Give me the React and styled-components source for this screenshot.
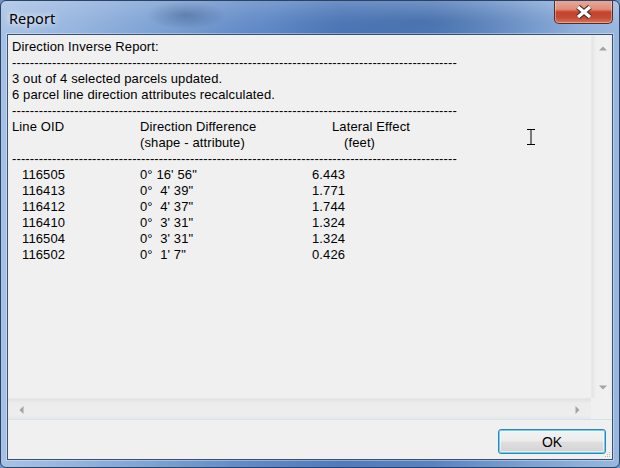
import React from "react";
import styled, { createGlobalStyle } from "styled-components";

const GlobalStyle = createGlobalStyle`
  html, body { margin: 0; padding: 0; width: 620px; height: 468px; overflow: hidden; background: #6f93c6; }
  #root { width: 620px; height: 468px; }
`;

const Window = styled.div`
  position: relative;
  box-sizing: border-box;
  width: 620px;
  height: 468px;
  border: 1px solid #2b4466;
  border-radius: 6px;
  display: flex;
  flex-direction: column;
  overflow: hidden;
  background:
    linear-gradient(180deg, rgba(255,255,255,0.18) 0px, rgba(255,255,255,0.05) 20px, rgba(255,255,255,0) 34px),
    radial-gradient(ellipse 40px 14px at 185px 14px, rgba(40,70,120,0.45), rgba(40,70,120,0)),
    radial-gradient(ellipse 160px 30px at 420px 20px, rgba(40,80,140,0.45), rgba(40,80,140,0)),
    linear-gradient(90deg, #a7c2e5 0%, #94b3de 12%, #7da2d4 24%, #6089c6 40%, #4f7bbd 55%, #5883c2 70%, #7ba0d3 85%, #98b8df 100%);
`;

const TitleBar = styled.div`
  height: 33px;
  display: flex;
  justify-content: space-between;
  align-items: flex-start;
  padding-left: 8px;
`;

const Title = styled.span`
  margin-top: 7px;
  font-family: "Noto Sans", "Liberation Sans", sans-serif;
  font-size: 14.5px;
  line-height: 20px;
  color: #000;
  text-shadow: 0 0 6px rgba(255,255,255,0.9), 0 0 10px rgba(255,255,255,0.6);
`;

const CloseButton = styled.div`
  box-sizing: border-box;
  width: 59px;
  height: 24px;
  margin-right: 6px;
  margin-top: -1px;
  border: 1px solid #5b2a22;
  border-top: none;
  border-radius: 0 0 5px 5px;
  display: flex;
  align-items: center;
  justify-content: center;
  background: linear-gradient(180deg, #e9a899 0%, #de8f7c 40%, #c8432b 52%, #c24a33 75%, #d9735c 100%);
  box-shadow: inset 0 0 0 1px rgba(255,255,255,0.35);
`;

const Client = styled.div`
  flex: 1;
  margin: 0 6px 7px 6px;
  border: 1px solid #37516f;
  box-shadow: 0 0 0 1px rgba(255,255,255,0.35);
  background: #f0f0f0;
  display: flex;
  flex-direction: column;
  min-height: 0;
`;

const ReportBox = styled.div`
  flex: 1;
  min-height: 0;
  display: grid;
  grid-template-columns: 1fr 21px;
  grid-template-rows: 1fr 21px;
  border-bottom: 1px solid #d3e1f1;
`;

const TextArea = styled.div`
  overflow: hidden;
  padding: 4px 0 0 4px;
  font-family: "Liberation Sans", Arial, sans-serif;
  font-size: 13px;
  letter-spacing: 0.12px;
  line-height: 16px;
  color: #000;
  white-space: pre;
`;

const Line = styled.div`
  height: 16px;
`;

const Dashes = styled.div`
  height: 16px;
`;

const HeaderRow = styled.div`
  display: grid;
  grid-template-columns: 128px 192px auto;
  height: 16px;
`;

const Cell = styled.span`
  padding-left: ${(p) => p.$indent || 0}px;
`;

const DataRow = styled.div`
  display: grid;
  grid-template-columns: 118px 172px auto;
  padding-left: 10px;
  height: 16px;
`;

const VScroll = styled.div`
  display: flex;
  flex-direction: column;
  justify-content: space-between;
  padding-top: 3px;
  background: linear-gradient(90deg, #e4e4e4 0%, #efefef 20%, #f1f1f1 80%, #ebebeb 100%);
  border-left: 1px solid #e8e8e8;
`;

const HScroll = styled.div`
  display: flex;
  justify-content: space-between;
  padding: 0 3px;
  background: linear-gradient(180deg, #e2e2e2 0%, #ececec 20%, #eeeeee 80%, #e8e8e8 100%);
  border-top: 1px solid #e6e6e6;
`;

const Corner = styled.div`
  background: #f0f0f0;
`;

const ArrowBtn = styled.div`
  width: 21px;
  height: 21px;
  display: flex;
  align-items: center;
  justify-content: center;
`;

const Footer = styled.div`
  position: relative;
  height: 39px;
  display: flex;
  justify-content: flex-end;
  align-items: flex-start;
  padding: 9px 6px 0 0;
  box-sizing: border-box;
`;

const OkButton = styled.button`
  box-sizing: border-box;
  width: 108px;
  height: 25px;
  padding: 0;
  border: 1px solid #3c7fb1;
  border-radius: 3px;
  background: linear-gradient(180deg, #f3f3f3 0%, #ececec 48%, #dfdfdf 52%, #d2d2d2 100%);
  box-shadow: inset 0 0 0 1px #5fd6f7, inset 0 0 0 2px rgba(255,255,255,0.5);
  font-family: "Liberation Sans", Arial, sans-serif;
  font-size: 14px;
  color: #000;
`;

const Grip = styled.svg`
  position: absolute;
  right: 1px;
  bottom: 1px;
`;

const Cursor = styled.svg`
  position: absolute;
  left: 526px;
  top: 128px;
`;

const Arrow = ({ dir }) => {
  const pts = {
    up: "0,4.5 4,0.5 8,4.5",
    down: "0,0.5 4,4.5 8,0.5",
    left: "4.5,0 0.5,4 4.5,8",
    right: "0.5,0 4.5,4 0.5,8",
  }[dir];
  const vertical = dir === "up" || dir === "down";
  return (
    <svg width={vertical ? 8 : 5} height={vertical ? 5 : 8}>
      <polygon points={pts} fill="#a3a3a3" />
    </svg>
  );
};

const DASH = "-".repeat(100);

const rows = [
  ["116505", "0° 16' 56\"", "6.443"],
  ["116413", "0°  4' 39\"", "1.771"],
  ["116412", "0°  4' 37\"", "1.744"],
  ["116410", "0°  3' 31\"", "1.324"],
  ["116504", "0°  3' 31\"", "1.324"],
  ["116502", "0°  1' 7\"", "0.426"],
];

export default function App() {
  return (
    <>
      <GlobalStyle />
      <Window>
        <TitleBar>
          <Title>Report</Title>
          <CloseButton>
            <svg width="18" height="14" viewBox="0 0 18 14">
              <path d="M3 2 L15 12 M15 2 L3 12" stroke="#3d2a27" strokeWidth="5.5" strokeLinecap="butt" />
              <path d="M3 2 L15 12 M15 2 L3 12" stroke="#ffffff" strokeWidth="3.4" strokeLinecap="butt" />
            </svg>
          </CloseButton>
        </TitleBar>
        <Client>
          <ReportBox>
            <TextArea>
              <Line>Direction Inverse Report:</Line>
              <Dashes>{DASH}</Dashes>
              <Line>3 out of 4 selected parcels updated.</Line>
              <Line>6 parcel line direction attributes recalculated.</Line>
              <Dashes>{DASH}</Dashes>
              <HeaderRow>
                <Cell>Line OID</Cell>
                <Cell>Direction Difference</Cell>
                <Cell>Lateral Effect</Cell>
              </HeaderRow>
              <HeaderRow>
                <Cell />
                <Cell>(shape - attribute)</Cell>
                <Cell $indent={12}>(feet)</Cell>
              </HeaderRow>
              <Dashes>{DASH}</Dashes>
              {rows.map((r) => (
                <DataRow key={r[0]}>
                  <Cell>{r[0]}</Cell>
                  <Cell>{r[1]}</Cell>
                  <Cell>{r[2]}</Cell>
                </DataRow>
              ))}
            </TextArea>
            <VScroll>
              <ArrowBtn><Arrow dir="up" /></ArrowBtn>
              <ArrowBtn><Arrow dir="down" /></ArrowBtn>
            </VScroll>
            <HScroll>
              <ArrowBtn><Arrow dir="left" /></ArrowBtn>
              <ArrowBtn><Arrow dir="right" /></ArrowBtn>
            </HScroll>
            <Corner />
          </ReportBox>
          <Footer>
            <OkButton>OK</OkButton>
            <Grip width="6" height="6">
              <rect x="4" y="0" width="1" height="1" fill="#b9b9b9" />
              <rect x="2" y="2" width="1" height="1" fill="#b9b9b9" />
              <rect x="4" y="2" width="1" height="1" fill="#b9b9b9" />
              <rect x="0" y="4" width="1" height="1" fill="#b9b9b9" />
              <rect x="2" y="4" width="1" height="1" fill="#b9b9b9" />
              <rect x="4" y="4" width="1" height="1" fill="#b9b9b9" />
            </Grip>
          </Footer>
        </Client>
        <Cursor width="8" height="16" viewBox="0 0 8 16">
          <path d="M0 0.5 H8 M4 1 V15 M0 15.5 H8" stroke="#000" strokeWidth="1" fill="none" />
        </Cursor>
      </Window>
    </>
  );
}
